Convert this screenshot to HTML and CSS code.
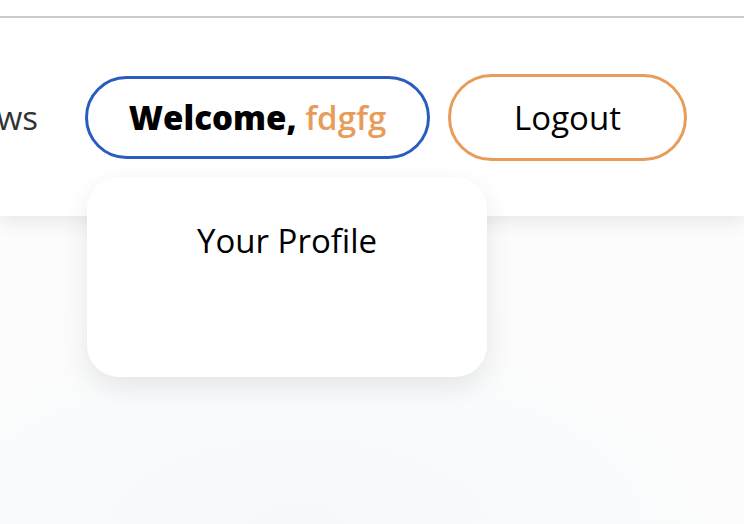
FILE: index.html
```html
<!DOCTYPE html>
<html lang="en">
<head>
<meta charset="utf-8">
<title>Header</title>
<link rel="stylesheet" href="styles.css">
</head>
<body>
  <div class="topbar"></div>
  <header class="header">
    <nav class="nav">
      <a class="nav-link" href="#">Reviews</a>
      <div class="user">
        <button class="welcome-btn"><span class="welcome">Welcome,</span> <span class="username">fdgfg</span></button>
        <div class="dropdown">
          <a class="dropdown-item" href="#">Your Profile</a>
        </div>
      </div>
      <button class="logout-btn">Logout</button>
    </nav>
  </header>
  <main class="main"></main>
</body>
</html>
```
FILE: styles.css
```css
* { box-sizing: border-box; }
html, body { height: 100%; }
body {
  margin: 0;
  font-family: "Open Sans", "Noto Sans", sans-serif;
  background: radial-gradient(ellipse 70% 45% at 40% 100%, #f7f8fc 0%, #fafbfc 60%, #fcfcfc 100%), #fcfcfc;
  overflow: hidden;
}
.topbar {
  height: 18px;
  background: #fff;
  border-bottom: 2px solid #cccccc;
}
.header {
  height: 198px;
  background: #fff;
  box-shadow: 0 8px 16px rgba(0, 0, 0, 0.07);
  position: relative;
  z-index: 1;
}
.nav {
  height: 100%;
  display: flex;
  align-items: center;
  justify-content: flex-end;
  padding-right: 57px;
  gap: 18px;
}
.nav > * { flex-shrink: 0; }
.nav-link {
  color: #333;
  text-decoration: none;
  font-size: 33px;
  margin-right: 29px;
  white-space: nowrap;
}
.user { position: relative; }
.welcome-btn {
  display: block;
  height: 83px;
  width: 345px;
  border: 3px solid #2a5cc0;
  border-radius: 42px;
  background: #fff;
  font-family: inherit;
  font-size: 33px;
  cursor: pointer;
  padding: 0;
}
.welcome { font-weight: 800; color: #000; }
.username { font-weight: 600; color: #e89c5a; }
.dropdown {
  position: absolute;
  left: 2px;
  top: 101px;
  width: 400px;
  height: 200px;
  background: #fff;
  border-radius: 32px;
  box-shadow: 0 10px 28px rgba(0, 0, 0, 0.09);
  display: flex;
  justify-content: center;
  padding-top: 44px;
}
.dropdown-item {
  color: #000;
  text-decoration: none;
  font-size: 33px;
  font-weight: 500;
  line-height: 40px;
  height: 40px;
}
.logout-btn {
  display: block;
  height: 87px;
  width: 239px;
  border: 3px solid #e89c5a;
  border-radius: 44px;
  background: #fff;
  font-family: inherit;
  font-size: 33px;
  color: #000;
  cursor: pointer;
  padding: 0;
}
.main { height: 300px; }
```
